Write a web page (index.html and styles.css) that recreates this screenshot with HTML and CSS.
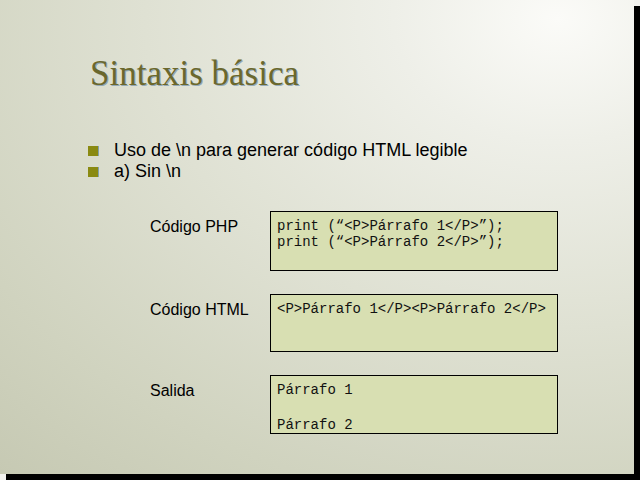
FILE: index.html
```html
<!DOCTYPE html>
<html lang="es">
<head>
    <meta charset="UTF-8">
    <title>Sintaxis básica</title>
    <link rel="stylesheet" href="styles.css">
</head>
<body>
    <div class="slide">
        <h1 class="title">Sintaxis básica</h1>
        <ul class="bullets">
            <li>Uso de \n para generar código HTML legible</li>
            <li>a) Sin \n</li>
        </ul>
        <div class="examples">
            <div class="row">
                <div class="label">Código PHP</div>
                <div class="code tall">
                    <div>print (“&lt;P&gt;Párrafo 1&lt;/P&gt;”);</div>
                    <div>print (“&lt;P&gt;Párrafo 2&lt;/P&gt;”);</div>
                </div>
            </div>
            <div class="row">
                <div class="label">Código HTML</div>
                <div class="code short">
                    <div>&lt;P&gt;Párrafo 1&lt;/P&gt;&lt;P&gt;Párrafo 2&lt;/P&gt;</div>
                </div>
            </div>
            <div class="row">
                <div class="label">Salida</div>
                <div class="code output">
                    <div>Párrafo 1</div>
                    <div>Párrafo 2</div>
                </div>
            </div>
        </div>
    </div>
</body>
</html>
```

FILE: styles.css
```css
* {
    margin: 0;
    padding: 0;
    box-sizing: border-box;
}

body {
    width: 640px;
    height: 480px;
    background: #f2f2ee;
    overflow: hidden;
}

.slide {
    width: 634px;
    height: 474px;
    background: radial-gradient(ellipse 130% 130% at 88% 4%, #fbfbf8 0%, #eeefe8 20%, #dfe1d3 50%, #d0d3bf 80%, #c6c9b3 100%);
    box-shadow: 6px 6px 0 #000;
    padding: 53px 0 0 90px;
    font-family: "Liberation Sans", Arial, sans-serif;
    color: #000;
}

.title {
    font-family: "Liberation Serif", "Times New Roman", serif;
    font-weight: normal;
    font-size: 35px;
    line-height: 42px;
    color: #6b682c;
    text-shadow: 1px 1px 0 rgba(80, 120, 160, 0.55);
}

.bullets {
    list-style: none;
    margin-top: 45px;
    margin-left: -2px;
}

.bullets li {
    display: flex;
    align-items: center;
    gap: 16px;
    font-size: 18px;
    line-height: 21px;
}

.bullets li::before {
    content: "";
    width: 10px;
    height: 10px;
    background: #8a8a12;
    box-shadow: 1px 0 0 rgba(70, 120, 150, 0.6);
    flex-shrink: 0;
}

.examples {
    margin-top: 29px;
    margin-left: 60px;
    display: flex;
    flex-direction: column;
    gap: 23px;
}

.row {
    display: flex;
}

.label {
    width: 120px;
    font-size: 16px;
    line-height: 16px;
    padding-top: 8px;
}

.code {
    width: 288px;
    height: 59px;
    background: #d8dfb2;
    border: 1px solid #000;
    padding: 6px 0 0 6px;
    font-family: "Liberation Mono", "Courier New", monospace;
    font-size: 14px;
    line-height: 16px;
    color: #111;
}

.code.tall {
    height: 60px;
}

.code.short {
    height: 58px;
}

.code.output {
    display: flex;
    flex-direction: column;
    gap: 19px;
}
```
